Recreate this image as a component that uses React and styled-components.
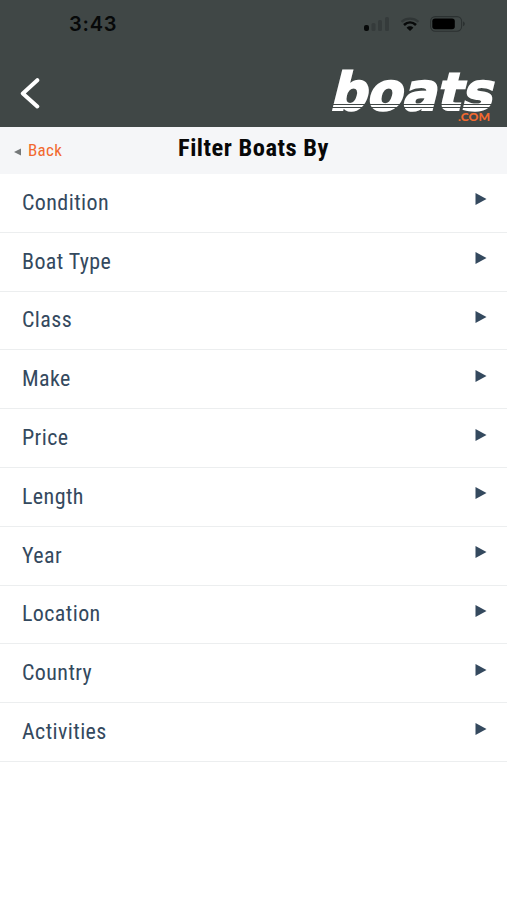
import React from 'react';
import styled, { createGlobalStyle } from 'styled-components';

const COLOR_HEADER = '#404746';
const COLOR_ORANGE = '#f2692f';
const COLOR_NAVY = '#34495e';
const CONDENSED = "'Roboto Condensed', Roboto, 'Liberation Sans', sans-serif";

const filters = [
	'Condition',
	'Boat Type',
	'Class',
	'Make',
	'Price',
	'Length',
	'Year',
	'Location',
	'Country',
	'Activities',
];

const Signal = () => (
	<svg width="26" height="16" viewBox="0 0 26 16">
		<rect x="0" y="9" width="5" height="6" rx="2" fill="#070909" />
		<rect x="7.5" y="7" width="4" height="8" rx="1.5" fill="#353b3b" />
		<rect x="14" y="4" width="4" height="11" rx="1.5" fill="#353b3b" />
		<rect x="21" y="1" width="4" height="14" rx="1.5" fill="#353b3b" />
	</svg>
);

const Wifi = () => (
	<svg width="20" height="15" viewBox="0 0 20 15" fill="none">
		<path d="M1.5 4.8C6.4 0.6 13.6 0.6 18.5 4.8" stroke="#303636" strokeWidth="2.2" />
		<path d="M4 8C7.6 4.7 12.4 4.7 16 8" stroke="#070909" strokeWidth="2.6" />
		<path d="M6.6 10.7C8.5 8.9 11.5 8.9 13.4 10.7L10 14Z" fill="#070909" />
	</svg>
);

const Battery = () => (
	<svg width="36" height="16" viewBox="0 0 36 16">
		<rect x="0.6" y="0.6" width="31" height="14.6" rx="4.6" fill="none" stroke="#2b3131" strokeWidth="1.1" />
		<rect x="2.3" y="2.5" width="22.5" height="10.8" rx="2.8" fill="#000" />
		<path d="M33 5.6C35.4 6.2 35.4 9.6 33 10.2Z" fill="#2b3131" />
	</svg>
);

const Logo = () => (
	<LogoSvg viewBox="0 0 166 56" role="img" aria-label="boats.com">
		<text className="name" transform="translate(-2 42) skewX(-14)" x="0" y="0" textLength="162" lengthAdjust="spacingAndGlyphs">
			boats
		</text>
		<path d="M0 36.5H168M0 39.5H168" stroke={COLOR_HEADER} strokeWidth="1" />
		<text className="domain" x="127" y="53" textLength="32" lengthAdjust="spacingAndGlyphs">
			.COM
		</text>
	</LogoSvg>
);

const App = () => (
	<React.Fragment>
		<GlobalStyle />
		<Page>
			<Header>
				<StatusBar>
					<Time>3:43</Time>
					<StatusIcons>
						<Signal />
						<Wifi />
						<Battery />
					</StatusIcons>
				</StatusBar>
				<Navbar>
					<NavbarBack aria-label="Back">
						<svg width="22" height="32" viewBox="0 0 22 32" fill="none">
							<path d="M19.3 3.2L4.8 16.4L19.3 29.4" stroke="#fff" strokeWidth="4" strokeLinecap="round" strokeLinejoin="round" />
						</svg>
					</NavbarBack>
					<Logo />
				</Navbar>
			</Header>
			<TitleBar>
				<BackLink>
					<svg width="7" height="8" viewBox="0 0 7 8">
						<path d="M7 0.5V7.5L0 4Z" fill="#75797a" />
					</svg>
					<span>Back</span>
				</BackLink>
				<Title>Filter Boats By</Title>
			</TitleBar>
			<FilterList>
				{filters.map((name) => (
					<FilterItem key={name}>
						<span>{name}</span>
						<Arrow viewBox="0 0 12 12">
							<path d="M0.5 0L11.5 6L0.5 12Z" fill={COLOR_NAVY} />
						</Arrow>
					</FilterItem>
				))}
			</FilterList>
		</Page>
	</React.Fragment>
);

export default App;

const GlobalStyle = createGlobalStyle`
	* {
		box-sizing: border-box;
	}
	body {
		margin: 0;
		background: #fff;
		font-family: ${CONDENSED};
		font-stretch: 75%;
	}
	svg {
		display: block;
		flex-shrink: 0;
	}
`;

const Page = styled.div`
	min-height: 900px;
	background: #fff;
`;

const Header = styled.header`
	height: 127px;
	background: ${COLOR_HEADER};
`;

const StatusBar = styled.div`
	display: flex;
	justify-content: space-between;
	align-items: center;
	height: 48px;
	padding: 0 41px 0 69px;
`;

const Time = styled.span`
	color: #070909;
	font-family: Inter, sans-serif;
	font-stretch: 100%;
	font-size: 20px;
	font-weight: 600;
	letter-spacing: 0.8px;
`;

const StatusIcons = styled.div`
	display: flex;
	align-items: center;
	gap: 10px;
`;

const Navbar = styled.div`
	display: flex;
	justify-content: space-between;
	align-items: flex-start;
	padding: 20px 10px 0 18px;
`;

const NavbarBack = styled.button`
	margin: 9px 0 0;
	padding: 0;
	border: 0;
	background: none;
`;

const LogoSvg = styled.svg`
	width: 166px;
	height: 56px;
	overflow: visible;
	.name {
		fill: #fff;
		stroke: #fff;
		stroke-width: 2.2;
		font-family: 'DejaVu Sans', sans-serif;
		font-stretch: 100%;
		font-size: 52px;
		font-weight: 700;
	}
	.domain {
		fill: ${COLOR_ORANGE};
		font-family: Lato, sans-serif;
		font-size: 10.5px;
		font-weight: 900;
	}
`;

const TitleBar = styled.div`
	display: grid;
	grid-template-columns: 1fr auto 1fr;
	align-items: center;
	height: 47px;
	background: #f5f6f8;
`;

const BackLink = styled.a`
	display: flex;
	align-items: center;
	gap: 7px;
	padding: 0 0 2px 14px;
	color: ${COLOR_ORANGE};
	font-size: 17px;
	letter-spacing: 0.3px;
	svg {
		margin-top: 4px;
	}
`;

const Title = styled.h1`
	margin: 0 0 7px;
	color: #080808;
	font-size: 24.5px;
	font-weight: 700;
	letter-spacing: 0.5px;
`;

const FilterList = styled.ul`
	margin: 0;
	padding: 0;
	list-style: none;
`;

const FilterItem = styled.li`
	display: flex;
	justify-content: space-between;
	align-items: center;
	height: 58.8px;
	padding: 0 20px 0 22px;
	border-bottom: 1px solid #eceeef;
	color: ${COLOR_NAVY};
	font-size: 22px;
	letter-spacing: 0.4px;
	span {
		margin-bottom: 1px;
	}
`;

const Arrow = styled.svg`
	width: 12px;
	height: 12px;
	margin-bottom: 7px;
`;
